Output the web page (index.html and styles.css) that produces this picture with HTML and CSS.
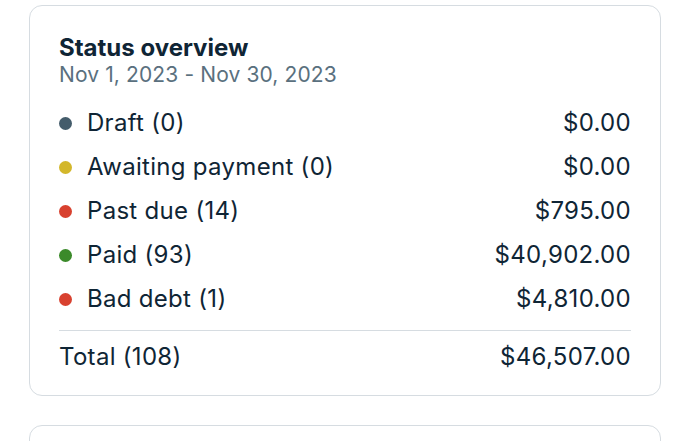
FILE: index.html
```html
<!DOCTYPE html>
<html>
<head>
<meta charset="utf-8">
<link rel="stylesheet" href="styles.css">
</head>
<body>
<div class="page">
  <section class="card">
    <h2 class="title">Status overview</h2>
    <div class="range">Nov 1, 2023 - Nov 30, 2023</div>
    <ul class="rows">
      <li class="row"><span class="label"><span class="dot dot-draft"></span>Draft (0)</span><span class="amount">$0.00</span></li>
      <li class="row"><span class="label"><span class="dot dot-awaiting"></span>Awaiting payment (0)</span><span class="amount">$0.00</span></li>
      <li class="row"><span class="label"><span class="dot dot-due"></span>Past due (14)</span><span class="amount">$795.00</span></li>
      <li class="row"><span class="label"><span class="dot dot-paid"></span>Paid (93)</span><span class="amount">$40,902.00</span></li>
      <li class="row"><span class="label"><span class="dot dot-bad"></span>Bad debt (1)</span><span class="amount">$4,810.00</span></li>
    </ul>
    <div class="total"><span>Total (108)</span><span class="amount">$46,507.00</span></div>
  </section>
  <section class="card card-next"></section>
</div>
</body>
</html>
```
FILE: styles.css
```css
html, body {
  margin: 0;
  padding: 0;
  background: #ffffff;
}
body {
  font-family: Inter, "Noto Sans", sans-serif;
  color: #0f2535;
}
.page {
  box-sizing: border-box;
  height: 441px;
  overflow: hidden;
  padding: 5px 29px 0 29px;
  display: flex;
  flex-direction: column;
  gap: 29px;
}
.card {
  flex: none;
  border: 1.5px solid #d6dce1;
  border-radius: 13px;
  padding: 28px 29px 16px 29px;
}
.title {
  margin: 0;
  font-size: 24px;
  font-weight: 700;
  line-height: 28px;
  color: #0f2535;
}
.range {
  font-size: 21px;
  line-height: 26px;
  letter-spacing: 0.12px;
  color: #5a707e;
}
.rows {
  list-style: none;
  margin: 13px 0 0 0;
  padding: 0;
}
.row, .total {
  display: flex;
  justify-content: space-between;
  align-items: center;
  font-size: 24px;
  letter-spacing: 0.3px;
  line-height: 44px;
  height: 44px;
}
.label {
  display: flex;
  align-items: center;
}
.dot {
  width: 13px;
  height: 13px;
  border-radius: 50%;
  margin: 0 15px 0 0;
  flex: none;
}
.dot-draft { background: #445c6b; }
.dot-awaiting { background: #d3b72b; }
.dot-due { background: #d8412f; }
.dot-paid { background: #3b8a2a; }
.dot-bad { background: #d8412f; }
.total {
  border-top: 1.5px solid #d6dce1;
  margin-top: 9px;
  padding-top: 4px;
}
.card-next {
  height: 60px;
  padding: 0;
}
```
